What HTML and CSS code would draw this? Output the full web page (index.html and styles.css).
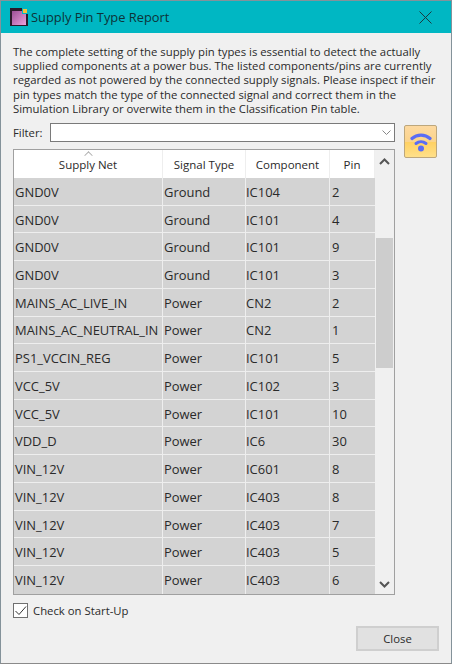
FILE: index.html
```html
<!DOCTYPE html>
<html lang="en">
<head>
	<meta charset="UTF-8">
	<title>Supply Pin Type Report</title>
	<link rel="stylesheet" href="styles.css">
</head>
<body>
	<div class="dialog">
		<div class="titleBar">
			<svg class="appIcon" width="18" height="18" viewBox="0 0 18 18">
				<defs>
					<linearGradient id="pink" x1="0" y1="0" x2="1" y2="1">
						<stop offset="0" stop-color="#9c4f96"/>
						<stop offset="1" stop-color="#eca0dc"/>
					</linearGradient>
				</defs>
				<rect x="0" y="0" width="18" height="18" fill="#2b1a2b"/>
				<rect x="2" y="3" width="14" height="14" fill="url(#pink)"/>
				<rect x="12" y="0" width="6" height="6" fill="#00b7c3"/>
				<rect x="13" y="1" width="4" height="4" fill="#f2c43c"/>
			</svg>
			<span class="titleText">Supply Pin Type Report</span>
			<svg class="closeX" width="13" height="13" viewBox="0 0 13 13">
				<path d="M.5.5l12 12M12.5.5l-12 12" stroke="#1c3a40" stroke-width="1" fill="none"/>
			</svg>
		</div>
		<div class="content">
			<p class="intro">The complete setting of the supply pin types is essential to detect the actually<br>supplied components at a power bus. The listed components/pins are currently<br>regarded as not powered by the connected supply signals. Please inspect if their<br>pin types match the type of the connected signal and correct them in the<br>Simulation Library or overwite them in the Classification Pin table.</p>
			<div class="filterArea">
				<div class="filterRow">
					<label class="filterLabel">Filter:</label>
					<div class="combo">
						<svg width="9" height="5" viewBox="0 0 9 5"><path d="M.5.5l4 4 4-4" stroke="#888" fill="none"/></svg>
					</div>
				</div>
				<button class="wifiBtn">
					<svg width="22" height="20" viewBox="0 0 22 20">
						<path d="M2 6.500C7 2 15 2 20 6.500" stroke="#5a6cf5" stroke-width="3.200" stroke-linecap="round" fill="none"/>
						<path d="M6 11.500C9 9 13 9 16 11.500" stroke="#5a6cf5" stroke-width="3" stroke-linecap="round" fill="none"/>
						<circle cx="11" cy="16.500" r="3" fill="#5a6cf5"/>
					</svg>
				</button>
			</div>
			<div class="tableBox">
				<div class="grid" id="grid">
					<div class="row head">
						<div class="cell c1 sorted">Supply Net</div>
						<div class="cell c2">Signal Type</div>
						<div class="cell c3">Component</div>
						<div class="cell c4">Pin</div>
					</div>
				</div>
				<div class="scrollBar">
					<svg class="arrow" width="11" height="7" viewBox="0 0 11 7"><path d="M1 6l4.500-4.500L10 6" stroke="#555" stroke-width="2" fill="none"/></svg>
					<div class="track"><div class="thumb"></div></div>
					<svg class="arrow" width="11" height="7" viewBox="0 0 11 7"><path d="M1 1l4.500 4.500L10 1" stroke="#555" stroke-width="2" fill="none"/></svg>
				</div>
			</div>
			<div class="checkRow">
				<span class="checkBox">
					<svg width="13" height="13" viewBox="0 0 13 13"><path d="M1.500 7l3.500 3.500 7-8" stroke="#333" fill="none"/></svg>
				</span>
				<span>Check on Start-Up</span>
			</div>
			<div class="footer">
				<button class="closeBtn">Close</button>
			</div>
		</div>
	</div>
	<script>
		var data = [
			['GND0V','Ground','IC104','2'],
			['GND0V','Ground','IC101','4'],
			['GND0V','Ground','IC101','9'],
			['GND0V','Ground','IC101','3'],
			['MAINS_AC_LIVE_IN','Power','CN2','2'],
			['MAINS_AC_NEUTRAL_IN','Power','CN2','1'],
			['PS1_VCCIN_REG','Power','IC101','5'],
			['VCC_5V','Power','IC102','3'],
			['VCC_5V','Power','IC101','10'],
			['VDD_D','Power','IC6','30'],
			['VIN_12V','Power','IC601','8'],
			['VIN_12V','Power','IC403','8'],
			['VIN_12V','Power','IC403','7'],
			['VIN_12V','Power','IC403','5'],
			['VIN_12V','Power','IC403','6']
		];
		var grid = document.getElementById('grid');
		data.forEach(function(r){
			var row = document.createElement('div');
			row.className = 'row';
			r.forEach(function(t,i){
				var c = document.createElement('div');
				c.className = 'cell c' + (i+1);
				c.textContent = t;
				row.appendChild(c);
			});
			grid.appendChild(row);
		});
	</script>
</body>
</html>
```

FILE: styles.css
```css
*{
	box-sizing: border-box;
}
html,body{
	margin: 0;padding: 0;
	height: 100%;
}
body{
	font-family: "Open Sans","Liberation Sans",sans-serif;
	font-size: 11.33px;
	color: #2a2a2a;
	background: #f0f0f0;
}
.dialog{
	width: 452px;
	height: 664px;
	border: 1px solid #84929a;
	border-bottom-color: #8a8a8a;
	background: #f0f0f0;
	display: flex;
	flex-direction: column;
}
.titleBar{
	height: 32px;
	flex: none;
	background: #00b7c3;
	display: flex;
	align-items: center;
	padding: 0 19px 0 9px;
	color: #0d3338;
}
.appIcon{
	flex: none;
}
.titleText{
	margin-left: 3px;
	font-size: 12.85px;
	flex: 1;
}
.content{
	flex: 1;
	display: flex;
	flex-direction: column;
	padding: 12px 12px 0;
}
.intro{
	margin: 0;
	line-height: 14.2px;
	white-space: nowrap;
}
.filterArea{
	position: relative;
	margin-top: 7px;
	height: 26px;
}
.filterRow{
	display: flex;
	align-items: center;
	width: 382px;
	height: 18px;
}
.filterLabel{
	width: 37px;
	flex: none;
}
.combo{
	flex: 1;
	height: 19px;
	background: #fff;
	border: 1px solid #7a7a7a;
	display: flex;
	align-items: center;
	justify-content: flex-end;
	padding-right: 3px;
}
.wifiBtn{
	position: absolute;
	left: 391px;
	top: 2px;
	width: 33px;
	height: 33px;
	padding: 0;
	border: 1px solid #bda77c;
	border-radius: 2px;
	background: linear-gradient(#fdd9a0 0,#fbd48c 50%,#ffd060 50%,#ffe08a 100%);
	display: flex;
	align-items: center;
	justify-content: center;
}
.tableBox{
	width: 382px;
	height: 446px;
	border: 1px solid #a0a0a0;
	display: flex;
	background: #fff;
}
.grid{
	width: 361px;
	flex: none;
}
.row{
	display: flex;
	height: 27.73px;
	border-bottom: 1px solid #eeeeee;
}
.row:last-child{
	border-bottom: 0;
}
.row.head{
	height: 28px;
	background: #fff;
	border-bottom: 0;
}
.cell{
	background: #d3d3d3;
	border-right: 1px solid #eeeeee;
	padding-left: 1px;
	padding-top: 1px;
	display: flex;
	align-items: center;
	font-size: 12.95px;
	white-space: nowrap;
	overflow: hidden;
}
.head .cell{
	background: #fff;
	justify-content: center;
	padding: 0;
	font-size: 11.500px;
	border-right: 1px solid #eee;
	position: relative;
}
.c1{
	width: 149px;
}
.c2{
	width: 83px;
	padding-left: 1px;
}
.c3{
	width: 84px;
	padding-left: 0;
}
.c4{
	width: 45px;
	padding-left: 2px;
	border-right: 0;
}
.head .sorted::before{
	content: "";
	position: absolute;
	left: 71px;
	top: 2px;
	width: 6px;
	height: 6px;
	border-left: 1px solid #aaa;
	border-top: 1px solid #aaa;
	transform: rotate(45deg) scale(.85);
}
.scrollBar{
	flex: 1;
	background: #f0f0f0;
	display: flex;
	flex-direction: column;
	align-items: center;
	padding: 8px 0 6px;
}
.track{
	flex: 1;
	width: 100%;
	padding-top: 73px;
}
.thumb{
	height: 130px;
	background: #cdcdcd;
	margin: 0 1px;
}
.checkRow{
	display: flex;
	align-items: center;
	margin-top: 8px;
	height: 15px;
}
.checkBox{
	width: 15px;
	height: 15px;
	border: 1px solid #707070;
	background: #fff;
	margin-right: 5px;
	display: flex;
	align-items: center;
	justify-content: center;
}
.footer{
	display: flex;
	justify-content: flex-end;
	margin-top: 8px;
}
.closeBtn{
	width: 83px;
	height: 25px;
	background: #e1e1e1;
	border: 2px solid #cfcfcf;
	font-family: inherit;
	font-size: 11.33px;
	color: #2a2a2a;
	padding: 0;
}
```
